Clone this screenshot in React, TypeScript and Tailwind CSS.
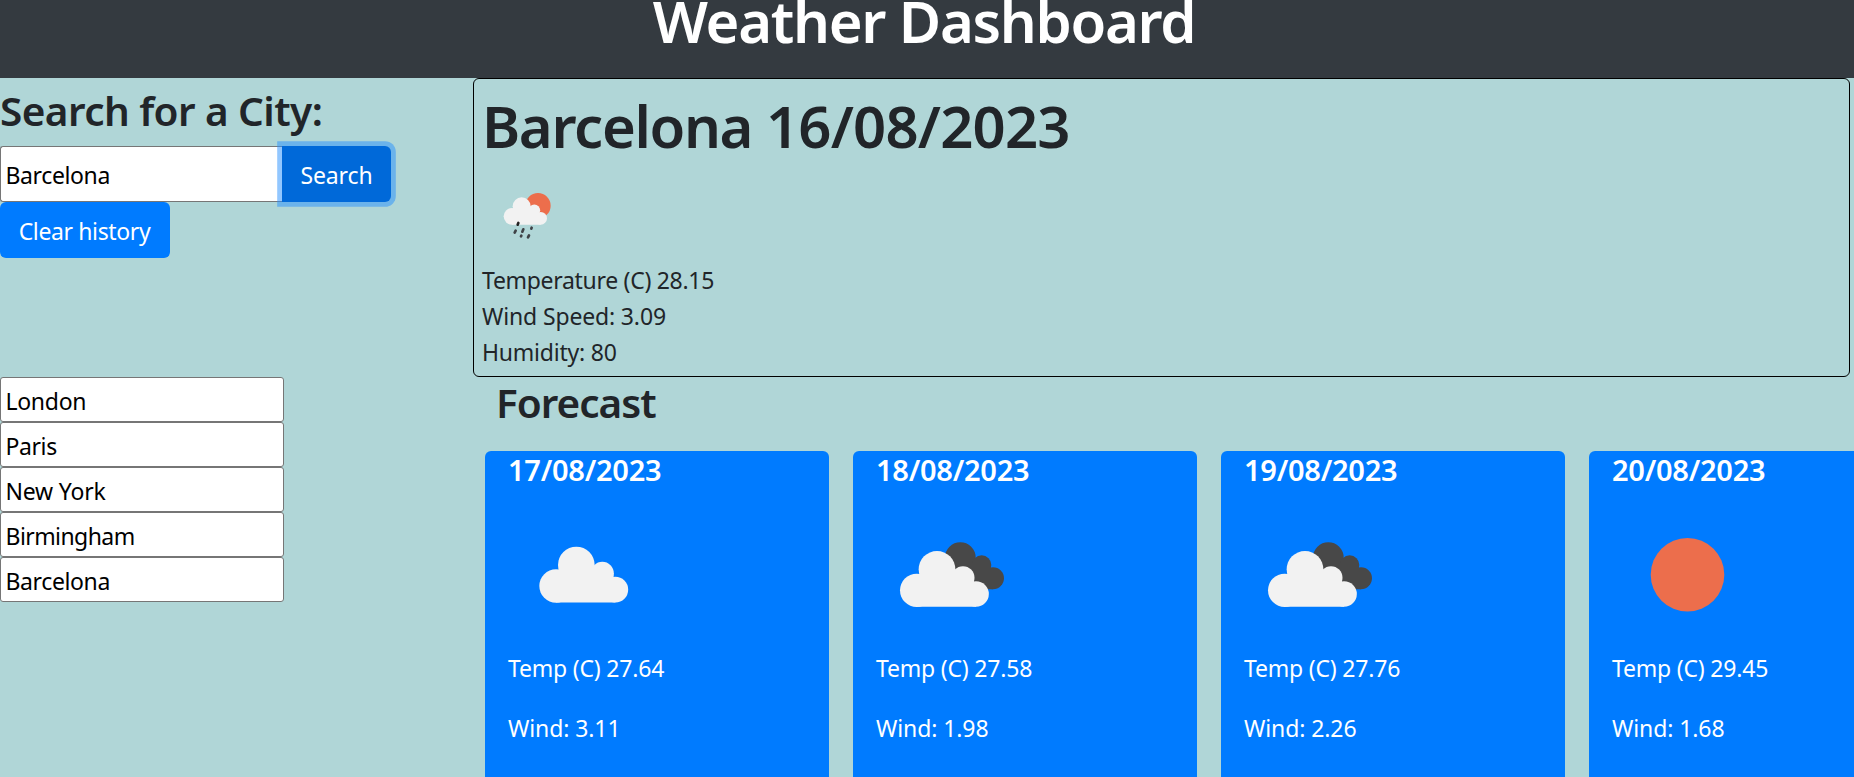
import type { ReactNode } from "react";

type Kind = "cloud" | "clouds" | "sun";

const history = [
  { name: "London", tracking: "tracking-[-0.3px]" },
  { name: "Paris", tracking: "tracking-[-0.4px]" },
  { name: "New York", tracking: "tracking-[-0.2px]" },
  { name: "Birmingham", tracking: "tracking-[-0.57px]" },
  { name: "Barcelona", tracking: "tracking-[-0.38px]" },
];

const forecast: { date: string; kind: Kind; temp: string; wind: string }[] = [
  { date: "17/08/2023", kind: "cloud", temp: "27.64", wind: "3.11" },
  { date: "18/08/2023", kind: "clouds", temp: "27.58", wind: "1.98" },
  { date: "19/08/2023", kind: "clouds", temp: "27.76", wind: "2.26" },
  { date: "20/08/2023", kind: "sun", temp: "29.45", wind: "1.68" },
];

function CloudShape() {
  return (
    <g fill="#f2f2f2">
      <circle cx="228" cy="438" r="50" />
      <circle cx="289" cy="375" r="55" />
      <circle cx="367" cy="400" r="34.5" />
      <circle cx="406" cy="449" r="38.5" />
      <path d="M228 400H400V449H406V487.5H228Z" />
    </g>
  );
}

function Svg({ viewBox, size, children }: { viewBox: string; size: string; children: ReactNode }) {
  return (
    <svg viewBox={viewBox} className={`block ${size}`} aria-hidden="true">
      {children}
    </svg>
  );
}

function WeatherIcon({ kind }: { kind: Kind }) {
  if (kind === "sun") {
    return (
      <Svg viewBox="0 0 150 150" size="size-[150px]">
        <circle cx="75.5" cy="74.7" r="36.8" fill="#ec6e4c" />
      </Svg>
    );
  }
  if (kind === "cloud") {
    return (
      <Svg viewBox="84 180 450 450" size="size-[150px]">
        <CloudShape />
      </Svg>
    );
  }
  return (
    <Svg viewBox="78 180 450 450" size="size-[150px]">
      <g fill="#484848">
        <circle cx="331" cy="353" r="46" />
        <circle cx="395" cy="375" r="29" />
        <circle cx="429" cy="415" r="33" />
        <path d="M320 375H422V415H429V448H320Z" />
      </g>
      <g transform="translate(-28 13)">
        <CloudShape />
      </g>
    </Svg>
  );
}

function RainIcon() {
  return (
    <Svg viewBox="6 9 225 225" size="size-[75px]">
      <circle cx="174" cy="107" r="38" fill="#ec6e4c" />
      <g fill="#f2f2f2">
        <circle cx="96" cy="139" r="25" />
        <circle cx="125" cy="109" r="27" />
        <circle cx="163" cy="121" r="17.5" />
        <circle cx="182" cy="145" r="19" />
        <path d="M96 120H178V145H182V164H96Z" />
      </g>
      <g stroke="#3f4347" strokeWidth="8" strokeLinecap="round">
        <path d="M115 159L113 164" stroke="#222" />
        <path d="M107 182L104 188" />
        <path d="M130 178L127 185" />
        <path d="M155 173L154 176" />
        <path d="M124 197L123 199" />
        <path d="M147 196L144 202" />
      </g>
    </Svg>
  );
}

export default function App() {
  return (
    <div className="h-[777px] w-full overflow-hidden bg-[#b0d6d7] font-['Noto_Sans',sans-serif] text-[23px] leading-9 whitespace-nowrap text-[#212529]">
      <header className="flex h-[78px] justify-center bg-[#343a40] pr-[6px]">
        <h1 className="text-[58px] leading-[42px] font-semibold tracking-[-1.33px] text-white">Weather Dashboard</h1>
      </header>
      <div className="flex">
        <aside className="w-[473px] shrink-0">
          <h3 className="pt-2 text-[40.5px] leading-[50px] font-semibold tracking-[-0.57px]">Search for a City:</h3>
          <div className="mt-2.5 flex h-14">
            <input
              defaultValue="Barcelona"
              className="h-14 w-[282px] rounded-l-[3px] border border-r-0 border-[#767676] bg-white pt-[2px] pl-[4.5px] tracking-[-0.38px] text-black outline-none"
            />
            <button className="h-14 w-[109px] rounded-r-md bg-[#0069d9] pt-[2px] tracking-[-0.1px] text-white shadow-[0_0_0_4.8px_rgba(38,143,255,0.5)]">
              Search
            </button>
          </div>
          <button className="block h-14 w-[170px] rounded-md bg-[#007bff] pt-[2px] pr-px tracking-[-0.37px] text-white">Clear history</button>
          <div className="mt-[119px] flex flex-col">
            {history.map((c) => (
              <input
                key={c.name}
                defaultValue={c.name}
                className={`h-[45px] w-[284px] rounded-[3px] border border-[#767676] bg-white pt-[3px] pl-[4.5px] text-black outline-none ${c.tracking}`}
              />
            ))}
          </div>
        </aside>
        <main className="min-w-0 flex-1">
          <section className="mr-1 h-[299px] rounded-md border border-black pl-2">
            <h1 className="pt-[11px] text-[58px] leading-[72px] font-semibold tracking-[-0.8px]">
              <span className="tracking-[-1.35px]">Barcelona </span>16/08/2023
            </h1>
            <div className="mt-[11px] mb-3.5">
              <RainIcon />
            </div>
            <p className="tracking-[-0.3px]">Temperature (C) 28.15</p>
            <p className="tracking-[-0.15px]">Wind Speed: 3.09</p>
            <p className="tracking-[-0.22px]">Humidity: 80</p>
          </section>
          <h3 className="pt-px pl-[23px] text-[40.5px] leading-[50px] font-semibold tracking-[-1px]">Forecast</h3>
          <div className="mt-[23px] ml-3 flex gap-6 text-white">
            {forecast.map((d) => (
              <article key={d.date} className="h-[380px] w-[344px] shrink-0 rounded-md bg-[#007bff] px-[23px]">
                <h5 className="mb-3 text-[29px] leading-[37px] font-semibold tracking-[-0.25px]">{d.date}</h5>
                <WeatherIcon kind={d.kind} />
                <p className="mb-6 tracking-[-0.2px]">Temp (C) {d.temp}</p>
                <p className="tracking-[-0.1px]">Wind: {d.wind}</p>
              </article>
            ))}
          </div>
        </main>
      </div>
    </div>
  );
}
